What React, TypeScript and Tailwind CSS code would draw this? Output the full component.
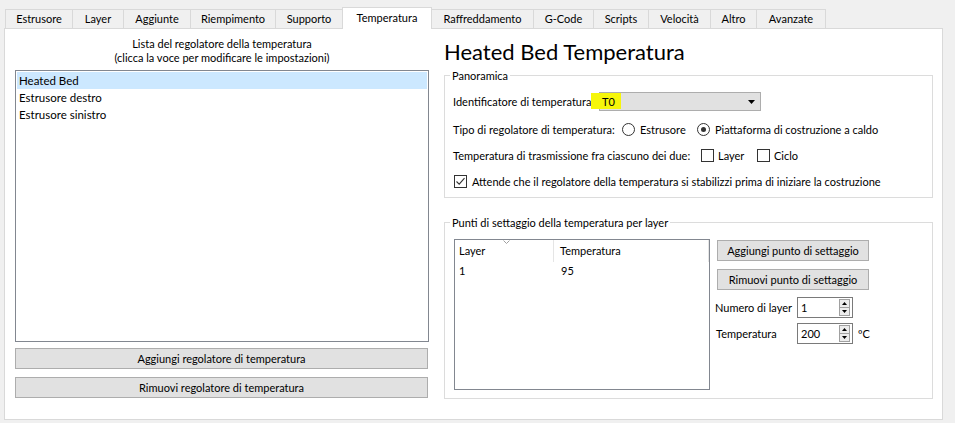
import React from "react";

const tabs: { label: string; w: string; sel?: boolean; noL?: boolean; last?: boolean }[] = [
  { label: "Estrusore", w: "w-[67px]" },
  { label: "Layer", w: "w-[51px]" },
  { label: "Aggiunte", w: "w-[67px]" },
  { label: "Riempimento", w: "w-[85px]" },
  { label: "Supporto", w: "w-[67px]" },
  { label: "Temperatura", w: "w-[90px]", sel: true },
  { label: "Raffreddamento", w: "w-[101px]", noL: true },
  { label: "G-Code", w: "w-[60px]" },
  { label: "Scripts", w: "w-[55px]" },
  { label: "Velocità", w: "w-[62px]" },
  { label: "Altro", w: "w-[46px]" },
  { label: "Avanzate", w: "w-[70px]", last: true },
];

function Radio({ checked }: { checked?: boolean }) {
  return (
    <div className="w-[13px] h-[13px] rounded-full border border-[#333333] bg-white flex items-center justify-center shrink-0">
      {checked && <div className="w-[5px] h-[5px] rounded-full bg-[#333333]" />}
    </div>
  );
}

function Check({ checked }: { checked?: boolean }) {
  return (
    <div className="w-[13px] h-[13px] border border-[#333333] bg-white flex items-center justify-center shrink-0">
      {checked && (
        <svg width="11" height="11" viewBox="0 0 11 11">
          <path d="M1.5 5.5 L4.2 8.2 L9.5 2.2" fill="none" stroke="#333333" strokeWidth="1.1" />
        </svg>
      )}
    </div>
  );
}

function Btn({ children, w }: { children: React.ReactNode; w: string }) {
  return (
    <div className={`${w} h-[21px] bg-[#e1e1e1] border border-[#adadad] flex items-center justify-center`}>
      {children}
    </div>
  );
}

function Spin({ value }: { value: string }) {
  return (
    <div className="w-[56px] h-[21px] border border-[#7a7a7a] bg-white flex items-center">
      <span className="pl-[3px] flex-1">{value}</span>
      <div className="w-[11px] h-[17px] mr-[2px] border border-[#a0a0a0] bg-[#ececec] flex flex-col">
        <div className="flex-1 flex items-center justify-center border-b border-[#a0a0a0]">
          <svg width="5" height="3" viewBox="0 0 5 3">
            <path d="M0 3 L2.5 0 L5 3 Z" fill="#000" />
          </svg>
        </div>
        <div className="flex-1 flex items-center justify-center">
          <svg width="5" height="3" viewBox="0 0 5 3">
            <path d="M0 0 L2.5 3 L5 0 Z" fill="#000" />
          </svg>
        </div>
      </div>
    </div>
  );
}

export default function App() {
  return (
    <div className="w-[955px] h-[423px] bg-[#f0f0f0] overflow-hidden font-['Lato',sans-serif] text-[11px] text-black leading-[14px] whitespace-nowrap">
      {/* Tabs */}
      <div className="flex items-end pl-[5px] h-[28px]">
        {tabs.map((t) => (
          <div
            key={t.label}
            className={[
              t.w,
              "flex items-center justify-center border-t border-[#d9d9d9]",
              t.noL ? "" : "border-l",
              t.last || t.sel ? "border-r" : "",
              t.sel ? "h-[22px] -mb-px bg-white relative z-10 pb-[2px]" : "h-[19px] bg-[#f0f0f0]",
            ].join(" ")}
          >
            {t.label}
          </div>
        ))}
      </div>

      {/* Panel */}
      <div className="ml-[4px] w-[939px] h-[392px] bg-white border border-[#d9d9d9] flex pl-[10px]">
        {/* Left column */}
        <div className="w-[414px] pt-[8px] flex flex-col">
          <div className="text-center">
            <div>Lista del regolatore della temperatura</div>
            <div>(clicca la voce per modificare le impostazioni)</div>
          </div>
          <div className="mt-[5px] h-[272px] w-[414px] border border-[#828790] p-[1px] text-[11.5px]">
            <div className="h-[17px] bg-[#cce8ff] pl-[2px] flex items-center">Heated Bed</div>
            <div className="h-[17px] pl-[2px] flex items-center">Estrusore destro</div>
            <div className="h-[17px] pl-[2px] flex items-center">Estrusore sinistro</div>
          </div>
          <div className="mt-[6px]">
            <Btn w="w-[413px]">Aggiungi regolatore di temperatura</Btn>
          </div>
          <div className="mt-[8px]">
            <Btn w="w-[413px]">Rimuovi regolatore di temperatura</Btn>
          </div>
        </div>

        {/* Right column */}
        <div className="ml-[15px] w-[489px] flex flex-col">
          <div className="mt-[9px] h-[28px] leading-[28px] text-[22px]">Heated Bed Temperatura</div>

          {/* Panoramica */}
          <div className="mt-[9px] relative h-[123px] border border-[#dcdcdc] pt-[16px] pl-[8px]">
            <span className="absolute -top-[7px] left-[5px] px-[2px] bg-white">Panoramica</span>
            <div className="h-[19px] flex items-center">
              <span className="w-[146px] shrink-0">Identificatore di temperatura</span>
              <div className="relative w-[162px] h-[19px] bg-[#e1e1e1] border border-[#adadad] flex items-center">
                <div className="absolute -left-[9px] top-0 w-[30px] h-[16px] bg-[#f6f60a]" />
                <span className="relative pl-[2px]">T0</span>
                <svg className="absolute right-[5px] top-[7px]" width="7" height="4" viewBox="0 0 7 4">
                  <path d="M0 0 L7 0 L3.5 4 Z" fill="#000" />
                </svg>
              </div>
            </div>
            <div className="mt-[9px] h-[19px] flex items-center">
              <span className="w-[169px] shrink-0">Tipo di regolatore di temperatura:</span>
              <Radio />
              <span className="ml-[5px] w-[57px] shrink-0">Estrusore</span>
              <Radio checked />
              <span className="ml-[5px]">Piattaforma di costruzione a caldo</span>
            </div>
            <div className="mt-[7px] h-[19px] flex items-center">
              <span className="w-[248px] shrink-0">Temperatura di trasmissione fra ciascuno dei due:</span>
              <Check />
              <span className="ml-[4px] w-[39px] shrink-0">Layer</span>
              <Check />
              <span className="ml-[4px]">Ciclo</span>
            </div>
            <div className="mt-[7px] h-[19px] flex items-center pl-[1px]">
              <Check checked />
              <span className="ml-[5px]">
                Attende che il regolatore della temperatura si stabilizzi prima di iniziare la costruzione
              </span>
            </div>
          </div>

          {/* Punti di settaggio */}
          <div className="mt-[24px] relative h-[177px] border border-[#dcdcdc] pt-[16px] pl-[9px] flex">
            <span className="absolute -top-[7px] left-[5px] px-[2px] bg-white">
              Punti di settaggio della temperatura per layer
            </span>
            <div className="w-[256px] h-[151px] border border-[#828790] bg-white flex flex-col">
              <div className="h-[22px] flex relative">
                <div className="w-[99px] border-r border-[#e5e5e5] pl-[4px] flex items-center">Layer</div>
                <div className="flex-1 pl-[6px] flex items-center border-r border-[#e5e5e5]">Temperatura</div>
                <svg className="absolute left-[48px] top-0" width="7" height="4" viewBox="0 0 7 4">
                  <path d="M0.5 0.5 L3.5 3.5 L6.5 0.5" fill="none" stroke="#a0a0a0" strokeWidth="1" />
                </svg>
              </div>
              <div className="h-[17px] flex items-center">
                <div className="w-[99px] pl-[4px]">1</div>
                <div className="pl-[7px]">95</div>
              </div>
            </div>
            <div className="ml-[7px] flex flex-col">
              <div className="mt-[1px]">
                <Btn w="w-[152px]">Aggiungi punto di settaggio</Btn>
              </div>
              <div className="mt-[8px]">
                <Btn w="w-[152px]">Rimuovi punto di settaggio</Btn>
              </div>
              <div className="mt-[7px] flex items-center -ml-[2px]">
                <span className="w-[82px] shrink-0">Numero di layer</span>
                <Spin value="1" />
              </div>
              <div className="mt-[5px] flex items-center -ml-[2px]">
                <span className="w-[82px] shrink-0 pl-[1px]">Temperatura</span>
                <Spin value="200" />
                <span className="ml-[5px]">ºC</span>
              </div>
            </div>
          </div>
        </div>
      </div>
    </div>
  );
}
